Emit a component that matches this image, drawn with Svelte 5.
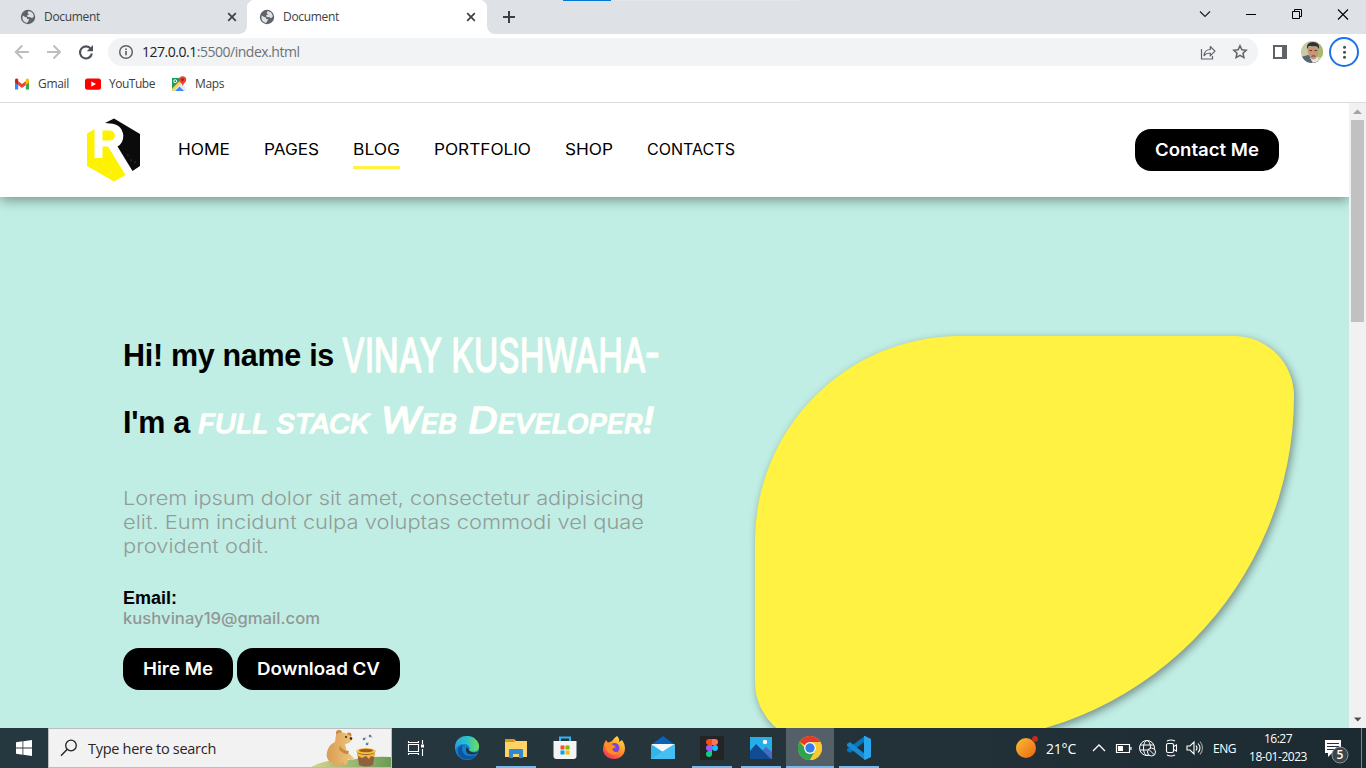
<script>
  const links = [
    { label: 'HOME', w: 52 },
    { label: 'PAGES', w: 55 },
    { label: 'BLOG', w: 47, active: true },
    { label: 'PORTFOLIO', w: 97 },
    { label: 'SHOP', w: 48 },
    { label: 'CONTACTS', w: 88 }
  ];
  const lines = [
    { t: 'Lorem ipsum dolor sit amet, consectetur adipisicing', w: 521 },
    { t: 'elit. Eum incidunt culpa voluptas commodi vel quae', w: 521 },
    { t: 'provident odit.', w: 146 }
  ];
  // Tracks a label out (or in) so that it fills the given width
  function fit(node, width) {
    const natural = node.getBoundingClientRect().width;
    const count = [...node.textContent].length;
    node.style.letterSpacing = `${(width - natural) / count}px`;
  }
  // Widens the letters themselves until the label fills the given width
  function stretch(node, width) {
    const natural = node.getBoundingClientRect().width;
    node.style.transformOrigin = '0 50%';
    node.style.transform = `scaleX(${width / natural})`;
    node.style.marginRight = `${width - natural}px`;
  }
</script>

{#snippet globe()}
  <svg width="16" height="16" viewBox="0 0 16 16"><circle cx="8" cy="8" r="7.2" fill="#5f6368"/><path d="M2.7 6.6 L5.2 8 L7 8.4 L7.2 10 L9.3 10.3 L8.4 12 L7 14 C3.5 13.5 1.8 10.5 2.7 6.6Z M8.3 2.3 C11 2 13.7 4.2 13.8 7.6 L12 9.2 L10.6 8.2 L7.7 7.9 L7 6.6 L9.2 5.3 L7.6 4.3Z" fill="#dee1e6"/></svg>
{/snippet}
{#snippet cross()}
  <svg width="10" height="10" viewBox="0 0 10 10"><path d="M1.2 1.2 8.8 8.8M8.8 1.2 1.2 8.8" stroke="#3c4043" stroke-width="1.7"/></svg>
{/snippet}

<div class="screen">
  <header class="tabs">
    <div class="tab idle">{@render globe()}<span class="title"><span class="fit" use:fit={56}>Document</span></span>{@render cross()}</div>
    <div class="tab open">{@render globe()}<span class="title"><span class="fit" use:fit={56}>Document</span></span>{@render cross()}</div>
    <div class="strip">
      <svg class="plus" width="14" height="14" viewBox="0 0 14 14"><path d="M7 1v12M1 7h12" stroke="#3c4043" stroke-width="2"/></svg>
      <i class="blue"></i><i class="track"></i>
      <div class="winbtns">
        <svg width="46" height="28" viewBox="0 0 46 28"><path d="M18 11.500l5 5 5-5" fill="none" stroke="#222" stroke-width="1.200"/></svg>
        <svg width="46" height="28" viewBox="0 0 46 28"><path d="M18 14.500h10" stroke="#000"/></svg>
        <svg width="46" height="28" viewBox="0 0 46 28"><path d="M18.500 11.500h7v7h-7zM20.500 11.500v-2h7v7h-2" fill="none" stroke="#000"/></svg>
        <svg width="46" height="28" viewBox="0 0 46 28"><path d="M18 9.500l10 10m0-10l-10 10" stroke="#000" stroke-width="1.100"/></svg>
      </div>
    </div>
  </header>

  <div class="toolbar">
    <svg width="32" height="36" viewBox="0 0 32 36"><path d="M15.500 18h13M22 11.500 15.500 18l6.500 6.500" transform="translate(.3 0)" fill="none" stroke="#bcbec1" stroke-width="2"/></svg>
    <svg width="32" height="36" viewBox="0 0 32 36"><path d="M15 18h13M21.500 11.500 28 18l-6.500 6.500" fill="none" stroke="#bcbec1" stroke-width="2"/></svg>
    <svg width="44" height="36" viewBox="0 0 44 36"><path d="M26.800 14.800a6 6 0 1 0 1.100 4.700" fill="none" stroke="#4e5257" stroke-width="2.100"/><path d="M29 11v6.200h-6.200z" fill="#4e5257"/></svg>
    <div class="omni">
      <svg width="16" height="16" viewBox="0 0 16 16"><circle cx="8" cy="8" r="6.300" fill="none" stroke="#5f6368" stroke-width="1.500"/><path d="M8 7v4.200M8 4.500v1.600" stroke="#5f6368" stroke-width="1.700"/></svg>
      <span class="url"><span class="fit" use:fit={157.5}><b>127.0.0.1</b>:5500/index.html</span></span>
      <svg width="18" height="18" viewBox="0 0 18 18"><path d="M2.500 6v10h11v-3" fill="none" stroke="#5f6368" stroke-width="1.200"/><path d="M5 12.500c.6-4 3-6 6.300-6V3.500l4.700 4.700-4.700 4.700V10C8.500 10 6.600 10.800 5 12.500z" fill="none" stroke="#5f6368" stroke-width="1.200" stroke-linejoin="round"/></svg>
      <svg class="star" width="16" height="16" viewBox="0 0 16 16"><path d="M8 1.700l1.850 4 4.350.5-3.200 3 .9 4.400L8 11.400l-3.900 2.200.9-4.400-3.200-3 4.350-.5z" fill="none" stroke="#5f6368" stroke-width="1.500"/></svg>
    </div>
    <svg class="panel" width="14" height="14" viewBox="0 0 14 14"><path d="M1 1h12v12H1z" fill="#fff" stroke="#5f6368" stroke-width="2"/><path d="M9 0h5v14H9z" fill="#5f6368"/></svg>
    <svg class="avatar" width="22" height="22" viewBox="0 0 22 22"><defs><clipPath id="face"><circle cx="11" cy="11" r="11"/></clipPath></defs><g clip-path="url(#face)"><path d="M0 0h22v22H0z" fill="#c9cba4"/><path d="M15 3h7v13h-7z" fill="#a6b96e"/><path d="M0 16l7-2 8 2 4 6H0z" fill="#556579"/><path d="M9 17l3 5 6-2-2-5z" fill="#e8e5e2"/><path d="M6.500 7q5-4 11 1l-1 7q-3 6-7 2-3-4-3-10z" fill="#c99675"/><path d="M6 8Q5 1 12 1q7 0 6 7l-2-2.500-8-.5z" fill="#34303a"/><path d="M8.500 9.500h2.500m2.500 0H16M10.500 15.300q2-1 4 0" stroke="#5b3b32" fill="none"/></g></svg>
    <svg class="more" width="30" height="30" viewBox="0 0 30 30"><circle cx="15" cy="15" r="14" fill="#fff" stroke="#1a73e8" stroke-width="2"/><g fill="#4a4d51"><circle cx="15.500" cy="10.300" r="1.500"/><circle cx="15.500" cy="15.300" r="1.500"/><circle cx="15.500" cy="20.300" r="1.500"/></g></svg>
  </div>

  <div class="bookmarks">
    <svg width="16" height="16" viewBox="0 0 16 16"><path d="M1 4v9.500h3.200V6z" fill="#4285f4"/><path d="M15 4v9.500h-3.200V6z" fill="#34a853"/><path d="M4.200 5L8 8l3.800-3v4L8 12 4.200 9z" fill="#ea4335"/><path d="M1 4.500c0-2 1.700-2.500 3.200-1.300V9L1 6.500z" fill="#c5221f"/><path d="M15 4.500c0-2-1.700-2.500-3.200-1.300V9L15 6.500z" fill="#fbbc04"/></svg>
    <span class="bm b1"><span class="fit" use:fit={31}>Gmail</span></span>
    <svg width="16" height="16" viewBox="0 0 16 16"><rect y="2.500" width="16" height="11.300" rx="2.500" fill="#f00"/><path d="M6.300 5.500v5.200L11 8.100z" fill="#fff"/></svg>
    <span class="bm b2"><span class="fit" use:fit={46}>YouTube</span></span>
    <svg width="16" height="16" viewBox="0 0 16 16"><path d="M1 2h12v13H1z" fill="#4285f4"/><path d="M1 2h11L1 14z" fill="#1e9d58"/><path d="M2 15L12 4l3 11z" fill="#e8eaed"/><path d="M1 12.800L10.500 3l2 1.500L2.500 15H1z" fill="#ffd04b"/><path d="M4 15l4.500-4.500L13 15z" fill="#4285f4"/><circle cx="4.200" cy="5.200" r="1.500" fill="none" stroke="#fff"/><path d="M8 3.800a3.600 3.600 0 0 1 7.200 0c0 2.600-2.600 3.200-3.500 6.200C11 7 8 6.400 8 3.800z" fill="#ea4335"/><circle cx="11.600" cy="3.800" r="1.200" fill="#901b12"/></svg>
    <span class="bm b3"><span class="fit" use:fit={29}>Maps</span></span>
  </div>

  <div class="view">
    <main>
      <nav>
        <svg class="logo" width="54" height="64" viewBox="0 0 54 64">
          <path d="M18 5L27 .5 53 16v32l-7.500 5L30.500 28.500Q36.500 25 36.300 17.500 35 6 23 5.500z" fill="#0b0b0b"/>
          <path d="M0 15.500l7.500-4.500v29h8V28.500h5.500L38.500 57 27 63.500 0 48z" fill="#fff200"/>
          <path d="M15.500 12.500H23c6.500 0 6.500 10 0 10h-7.500z" fill="#fff200"/>
          <g fill="#fff" opacity=".4"><circle cx="10" cy="49" r=".6"/><circle cx="17" cy="47" r=".7"/><circle cx="24" cy="54" r=".8"/><circle cx="20" cy="57" r=".6"/><circle cx="27" cy="48" r=".6"/><circle cx="44" cy="42" r=".6"/><circle cx="48" cy="44" r=".6"/><circle cx="41" cy="37" r=".5"/></g>
        </svg>
        <div class="links">
          {#each links as l}
            <a class:active={l.active} style:width="{l.w}px"><span class="fit" use:stretch={l.w}>{l.label}</span></a>
          {/each}
        </div>
        <button class="contact"><span class="fit" use:stretch={104}>Contact Me</span></button>
      </nav>
      <section>
        <div class="intro">
          <h1>
            <span class="row"><span class="plain"><span class="fit" use:fit={211}>Hi! my name is</span></span><svg width="320" height="67"><text class="tall" x="1" y="50" textLength="318" lengthAdjust="spacingAndGlyphs">VINAY KUSHWAHA-</text></svg></span>
            <span class="row"><span class="plain second"><span class="fit" use:fit={67}>I'm a</span></span><svg width="460" height="67"><text class="mixed" x="1" y="44" textLength="456" lengthAdjust="spacingAndGlyphs"><tspan class="sc">full stack</tspan> W<tspan class="sc">eb</tspan> D<tspan class="sc">eveloper</tspan>!</text></svg></span>
          </h1>
          <p class="lorem">{#each lines as l}<span class="line"><span class="fit" use:stretch={l.w}>{l.t}</span></span>{/each}</p>
          <div class="label"><span class="fit" use:fit={54}>Email:</span></div>
          <div class="mail"><span class="fit" use:stretch={197}>kushvinay19@gmail.com</span></div>
          <div class="actions">
            <button class="hire"><span class="fit" use:stretch={70}>Hire Me</span></button>
            <button class="cv"><span class="fit" use:stretch={123}>Download CV</span></button>
          </div>
        </div>
        <div class="leaf"></div>
      </section>
    </main>
    <aside class="scroll">
      <svg width="17" height="17" viewBox="0 0 17 17"><path d="M4 11l4.500-4.500L13 11z" fill="#a3a3a3"/></svg>
      <div class="thumb"></div>
      <svg width="17" height="17" viewBox="0 0 17 17"><path d="M5 6.500h7.500L8.700 10.500z" fill="#505050"/></svg>
    </aside>
  </div>

  <footer>
    <div class="start"><svg width="16" height="16" viewBox="0 0 16 16"><path d="M0 2.300L6.500 1.300v6.300H0zM7.300 1.200L16 0v7.600H7.300zM0 8.400h6.500v6.300L0 13.800zM7.300 8.400H16V16l-8.700-1.200z" fill="#fff"/></svg></div>
    <div class="search">
      <svg class="lens" width="18" height="18" viewBox="0 0 18 18"><circle cx="11" cy="6.500" r="5.300" fill="none" stroke="#222" stroke-width="1.300"/><path d="M7.300 10.300L1 16.700" stroke="#222" stroke-width="1.400"/></svg>
      <span class="prompt"><span class="fit" use:fit={128}>Type here to search</span></span>
      <svg class="bear" width="80" height="38" viewBox="0 0 80 38">
        <defs><linearGradient id="hill"><stop stop-color="#d3d58f"/><stop offset="1" stop-color="#6b9d55"/></linearGradient><linearGradient id="fur"><stop stop-color="#d99c50"/><stop offset="1" stop-color="#efc77f"/></linearGradient></defs>
        <path d="M0 38Q16 29 40 31q17-4 40-3v10z" fill="url(#hill)"/>
        <circle cx="28" cy="4" r="3" fill="#c68a43"/><circle cx="38" cy="6" r="2.500" fill="#c68a43"/>
        <path d="M25 6q4-5 11-1 5 2 5 6-3 4-7 4l2 8 7 6q-2 4-6 1l-1 5q-9 4-15-1-8-4-4-14 2-5 7-7z" fill="url(#fur)"/>
        <path d="M29 17q3 5 9 5l-1 3q-6 0-9-5" fill="#c9893f"/><circle cx="35" cy="8" r="1" fill="#352114"/><circle cx="40" cy="9.500" r="1.300" fill="#352114"/>
        <path d="M17 34q8 4 16-1v4H21z" fill="#deaa61"/>
        <path d="M46 22h18l-2 14q-7 3-14 0z" fill="#916040"/><ellipse cx="55" cy="22" rx="10" ry="3" fill="#f7c846"/><ellipse cx="55" cy="21.500" rx="7" ry="1.700" fill="#a15d22"/><path d="M46 24q9 4 18 0l-1 4-3-1-2 3-3-3-4 2-4-2z" fill="#f4b831"/>
        <g fill="#557ca8"><circle cx="53" cy="10" r="1.300"/><circle cx="59" cy="7" r="1.300"/><circle cx="56" cy="15" r="1.300"/></g><g fill="#d5a63d"><circle cx="54.500" cy="9" r=".8"/><circle cx="60.500" cy="8" r=".8"/><circle cx="57" cy="14" r=".8"/></g>
      </svg>
    </div>
    <div class="task view-btn"><svg width="18" height="18" viewBox="0 0 18 18"><path d="M1.500 5.500h10v7h-10zM1.500 2v1.500h10V2M1.500 16v-1.500h10V16M15.500 1v4M15.500 10v7" fill="none" stroke="#fff" stroke-width="1.100"/><path d="M14 5.500h3v3h-3z" fill="#fff"/></svg></div>
    <div class="task"><svg width="26" height="26" viewBox="0 0 26 26"><defs><linearGradient id="eg" x1="0" x2="1"><stop stop-color="#2ba3de"/><stop offset=".5" stop-color="#2cc2c9"/><stop offset="1" stop-color="#72dd55"/></linearGradient></defs><circle cx="13" cy="13" r="12" fill="#1680d0"/><path d="M1 13C1 4 7 1 13 1c8 0 14 7 11.500 13-2 4-8 3-9.500 1 2-3-1-6-5-6-5 0-8 3-9 6z" fill="url(#eg)"/><path d="M8 13c0 6 5 10 14 7-5 7-16 5-18-2-1-5 2-8 6-8-2 1-2 2-2 3z" fill="#0c55a0"/><path d="M15 15.500c2 2 6 3 9.500.5l-1.500 2.500c-5 2-11 1-11-3.500 0-2 0-2 1-2.500q2 1 2 3z" fill="#25343b"/></svg></div>
    <div class="task run"><svg width="24" height="24" viewBox="0 0 24 24"><path d="M1 3h9l2 2h11v16H1z" fill="#ffd267"/><path d="M1 3h9l1 3H1z" fill="#d89a10"/><path d="M5 14q0-1 1-1h12q1 0 1 1v8h-4v-4H9v4H5z" fill="#2d89d4"/></svg></div>
    <div class="task"><svg width="24" height="24" viewBox="0 0 24 24"><path d="M7 6V1.500h10V6" fill="none" stroke="#32b4ed" stroke-width="2"/><path d="M.5 5h23v15q0 3-3 3h-17q-3 0-3-3z" fill="#f4f4f4"/><path d="M7.500 9.500h4v4h-4z" fill="#f25022"/><path d="M12.500 9.500h4v4h-4z" fill="#7fba00"/><path d="M7.500 14.500h4v4h-4z" fill="#00a4ef"/><path d="M12.500 14.500h4v4h-4z" fill="#ffb900"/></svg></div>
    <div class="task"><svg width="24" height="24" viewBox="0 0 24 24"><defs><linearGradient id="ff" x1=".8" y1="0" x2=".2" y2="1"><stop stop-color="#ffe34b"/><stop offset=".5" stop-color="#ff9227"/><stop offset="1" stop-color="#f52860"/></linearGradient></defs><path d="M4 4l2 3 4-2q2-3 5-5 3 3 2 6l3-2q3 4 3 8c0 7-5 11-11 11S1 19 1 13q0-5 3-9z" fill="url(#ff)"/><circle cx="12.500" cy="12" r="5" fill="#7946d8"/><path d="M3 7q4-2 8 2l3 2-4 2q2 4 7 3-4 5-10 1-4-3-4-10z" fill="#ff8e26"/></svg></div>
    <div class="task"><svg width="24" height="24" viewBox="0 0 24 24"><path d="M0 9L12 0l12 9z" fill="#0c61b8"/><path d="M1 8h22v9H1z" fill="#f5f7fa"/><path d="M0 8l12 8L24 8v15H0z" fill="#30b5ef"/><path d="M0 23l17-11 7-4v15z" fill="#45bff2"/></svg></div>
    <div class="task run"><svg width="24" height="24" viewBox="0 0 24 24"><path d="M0 0h24v24H0z" fill="#242424"/><path d="M12 3h-3a3 3 0 0 0 0 6h3z" fill="#f24e1e"/><path d="M12 3h3a3 3 0 0 1 0 6h-3z" fill="#ff7262"/><path d="M12 9h-3a3 3 0 0 0 0 6h3z" fill="#a259ff"/><circle cx="15" cy="12" r="3" fill="#1abcfe"/><path d="M12 15h-3a3 3 0 1 0 3 3z" fill="#0acf83"/></svg></div>
    <div class="task run"><svg width="22" height="22" viewBox="0 0 22 22"><path d="M0 0h22v22H0z" fill="#26aee9"/><path d="M9 17l7-7 6 5v7H9z" fill="#496bc6"/><path d="M0 14l6-7 15 15H0z" fill="#104c91"/><circle cx="15" cy="5" r="2.200" fill="#fff"/></svg></div>
    <div class="task run current"><svg width="24" height="24" viewBox="0 0 24 24"><circle cx="12" cy="12" r="12" fill="#fc3"/><path d="M12 12L1.600 6A12 12 0 0 1 22.400 6H12z" fill="#e33b2e"/><path d="M1.600 6A12 12 0 0 0 12 24l5.200-9L12 12H7z" fill="#2da44f"/><path d="M12 6h10.400A12 12 0 0 1 12 24l5.200-9z" fill="#fcca30"/><circle cx="12" cy="12" r="5.900" fill="#fff"/><circle cx="12" cy="12" r="4.700" fill="#387ce8"/></svg></div>
    <div class="task run"><svg width="24" height="24" viewBox="0 0 24 24"><path d="M18 0l-1 6L3 17l-3-2v-2z" fill="#0876bd"/><path d="M0 8l3-2 15 12v6L0 10z" fill="#168bd2"/><path d="M17 0h1l6 3v18l-6 3-1-1z" fill="#2aa6ed"/></svg></div>

    <div class="tray">
      <svg width="32" height="40" viewBox="0 0 32 40"><defs><linearGradient id="sun" x1="0" y1="0" x2="1" y2="1"><stop stop-color="#f8bf35"/><stop offset="1" stop-color="#ef6410"/></linearGradient></defs><circle cx="12" cy="20" r="10" fill="url(#sun)"/><circle cx="21" cy="11" r="3" fill="#c42b1c"/></svg>
      <span class="temp"><span class="fit" use:fit={30}>21°C</span></span>
      <svg width="22" height="40" viewBox="0 0 22 40"><path d="M5 23l6-6 6 6" fill="none" stroke="#fff" stroke-width="1.300"/></svg>
      <svg width="26" height="40" viewBox="0 0 26 40"><path d="M6.500 16.500h13v8h-13zM21 19v3" fill="none" stroke="#fff" stroke-width="1.200"/><path d="M8 18h5v5H8z" fill="#fff"/></svg>
      <svg width="23" height="40" viewBox="0 0 23 40"><g fill="none" stroke="#fff"><circle cx="11" cy="20" r="7.500"/><ellipse cx="11" cy="20" rx="3.500" ry="7.500"/><path d="M4 17h14M4 22h14"/><circle cx="15.500" cy="24" r="4" fill="#1f2d34"/><path d="M12.800 21.300l5.400 5.400"/></g></svg>
      <svg width="24" height="40" viewBox="0 0 24 40"><g fill="none" stroke="#fff" stroke-width="1.100"><rect x="7.500" y="15.500" width="7" height="9" rx="1.500"/><path d="M14.500 18.500l3-1.500v6l-3-1.500M8 13q4-2 8 0M8 27q4 2 8 0"/></g></svg>
      <svg width="23" height="40" viewBox="0 0 23 40"><g fill="none" stroke="#fff" stroke-width="1.100"><path d="M4 18h3l4-4v12l-4-4H4zM13 17.500q2 2.500 0 5M15 15.500q4 4.500 0 9"/><path d="M17 13.500q5 6.500 0 13" opacity=".55"/></g></svg>
      <span class="eng"><span class="fit" use:fit={23}>ENG</span></span>
      <span class="clock"><span><span class="fit" use:fit={28}>16:27</span></span><span><span class="fit" use:fit={58}>18-01-2023</span></span></span>
      <span class="note"><svg width="48" height="40" viewBox="0 0 48 40"><path d="M12 12h16v13h-9l-4 4v-4h-3z" fill="#fff"/><path d="M14 15.500h12M14 18.500h12M14 21.500h8" stroke="#25333a"/><circle cx="27" cy="27" r="8" fill="#3a464c" stroke="#889095"/><text x="27" y="31.200" text-anchor="middle" font-size="12" font-weight="600" fill="#fff">5</text></svg></span>
    </div>
  </footer>
</div>

<style>
  :global(body) { margin: 0; overflow: hidden; }
  .screen { width: 1366px; height: 768px; display: flex; flex-direction: column; font-family: "Open Sans", "Noto Sans", sans-serif; overflow: hidden; background: #fff; }
  svg { display: block; flex: none; }
  .fit { display: inline-block; white-space: pre; }
  .tabs { display: flex; height: 34px; flex: none; background: #fff; color: #3c4043; font-size: 12px; }
  .tab { display: flex; align-items: center; box-sizing: border-box; height: 34px; }
  .idle { width: 247px; padding-left: 20px; background: #dee1e6; border-bottom-right-radius: 8px; }
  .open { width: 240px; padding-left: 12px; background: radial-gradient(circle at 8px 8px, #fff 8px, #dee1e6 8.500px) 0 0 / 8px 8px no-repeat, radial-gradient(circle at 0 8px, #fff 8px, #dee1e6 8.500px) 100% 0 / 8px 8px no-repeat, #fff; }
  .title { width: 191px; padding: 0 0 1px 8px; box-sizing: border-box; flex: none; }
  .strip { position: relative; flex: 1; background: #dee1e6; border-bottom-left-radius: 8px; display: flex; justify-content: space-between; }
  .plus { margin: 10px 0 0 15px; }
  .blue { position: absolute; left: 76px; top: 0; width: 48px; height: 1px; background: #0078d7; }
  .track { position: absolute; left: 124px; top: 0; width: 190px; height: 1px; background: #e6e6e6; }
  .winbtns { display: flex; width: 184px; }
  .toolbar { display: flex; height: 36px; align-items: center; flex: none; }
  .omni { width: 1150px; height: 28px; box-sizing: border-box; border-radius: 14px; background: #f1f3f4; display: flex; align-items: center; padding: 0 10px; }
  .url { flex: 1; padding-left: 8px; font-size: 14px; color: #6d7175; line-height: 28px; }
  .url b { font-weight: 400; color: #202124; }
  .star { margin-left: 15px; }
  .panel { margin-left: 15px; }
  .avatar { margin-left: 14px; }
  .more { margin-left: 6px; }
  .bookmarks { display: flex; align-items: center; height: 32px; padding: 0 0 4px 14px; box-sizing: border-box; font-size: 12px; color: #3c4043; flex: none; }
  .bm { padding: 0 0 1px 8px; box-sizing: border-box; }
  .b1 { width: 55px; }
  .b2 { width: 70px; }
  .view { display: flex; height: 626px; box-sizing: border-box; border-top: 1px solid #dadce0; flex: none; overflow: hidden; }
  main { width: 1349px; height: 625px; background: #c0eee4; font-family: Inter, sans-serif; overflow: hidden; }
  nav { position: relative; display: flex; height: 94px; box-sizing: border-box; background: #fff; align-items: center; padding: 0 70px 0 87px; box-shadow: 0 3px 12px rgba(0, 0, 0, .4); }
  .links { display: flex; gap: 34.200px; margin-left: 36.500px; flex: 1; }
  .links a { height: 39px; line-height: 39px; margin-top: -1px; box-sizing: border-box; font-size: 15.500px; font-weight: 420; color: #000; border-bottom: 3px solid transparent; }
  .links .active { border-color: #fff242; }
  button { border: 0; padding: 0; height: 42px; border-radius: 16px; background: #000; color: #fff; font: 600 17.500px/42px Inter, sans-serif; text-align: center; }
  .contact { width: 144px; }
  section { display: flex; padding: 125px 55px 0 123px; }
  .intro { width: 632px; flex: none; }
  h1 { margin: 0; font: 700 30.500px/67px "Liberation Sans", sans-serif; color: #000; }
  .row { display: flex; height: 67px; }
  .plain { width: 218px; flex: none; }
  .second { width: 74px; }
  .row svg { overflow: visible; }
  .row text { fill: #fffffb; stroke: #fffffb; stroke-width: 1.600; stroke-linejoin: round; font-family: Inter, sans-serif; font-weight: 400; }
  .tall { font-size: 46px; }
  .mixed { font-size: 36px; font-style: italic; }
  .sc { font-size: 25px; text-transform: uppercase; }
  .lorem { margin: 31px 0 29px; color: #929c99; font-size: 19px; line-height: 24px; font-weight: 300; }
  .line { display: block; height: 24px; }
  .label { font: 700 18px/20px "Liberation Sans", sans-serif; height: 20px; }
  .mail { height: 21px; line-height: 21px; font-size: 15.500px; font-weight: 550; color: #929695; }
  .actions { display: flex; gap: 4px; margin-top: 19px; }
  .hire { width: 110px; }
  .cv { width: 163px; }
  .leaf { width: 539px; height: 406px; margin-top: 14px; flex: none; background: #fff242; border-radius: 205px 60px 346px 60px; box-shadow: 2px 3px 8px rgba(0, 0, 0, .4); }
  .scroll { width: 17px; background: #f1f1f1; display: flex; flex-direction: column; align-items: center; }
  .thumb { width: 13px; height: 202px; background: #c1c1c1; margin-bottom: auto; }
  footer { height: 40px; flex: none; display: flex; background: linear-gradient(90deg, #25373f, #26353c 50%, #1c2a31); color: #fff; }
  .start { width: 48px; display: grid; place-items: center; }
  .search { width: 344px; box-sizing: border-box; background: #f2f2f2; border: 1px solid #b9bec0; display: flex; align-items: center; padding-left: 11px; color: #262626; }
  .prompt { padding-left: 10px; font-size: 14.500px; width: 233px; box-sizing: border-box; flex: none; }
  .task { width: 49px; height: 40px; display: grid; place-items: center; flex: none; position: relative; }
  .view-btn { width: 48px; margin-right: 2px; }
  .run::after { content: ""; position: absolute; left: 4.500px; right: 4.500px; bottom: 0; height: 2px; background: #76b9ed; }
  .current { width: 48px; margin-left: 1px; background: #536067; }
  .current::after { left: 0; right: 0; }
  .tray { display: flex; margin-left: auto; align-items: center; height: 40px; width: 352px; flex: none; }
  .temp { width: 42px; font-size: 14px; }
  .eng { width: 37px; text-align: center; font-size: 12px; }
  .clock { width: 70px; text-align: center; font-size: 12px; line-height: 18px; display: flex; flex-direction: column; padding-bottom: 1px; }
  .note { border-right: 1px solid #7d868a; }
</style>
